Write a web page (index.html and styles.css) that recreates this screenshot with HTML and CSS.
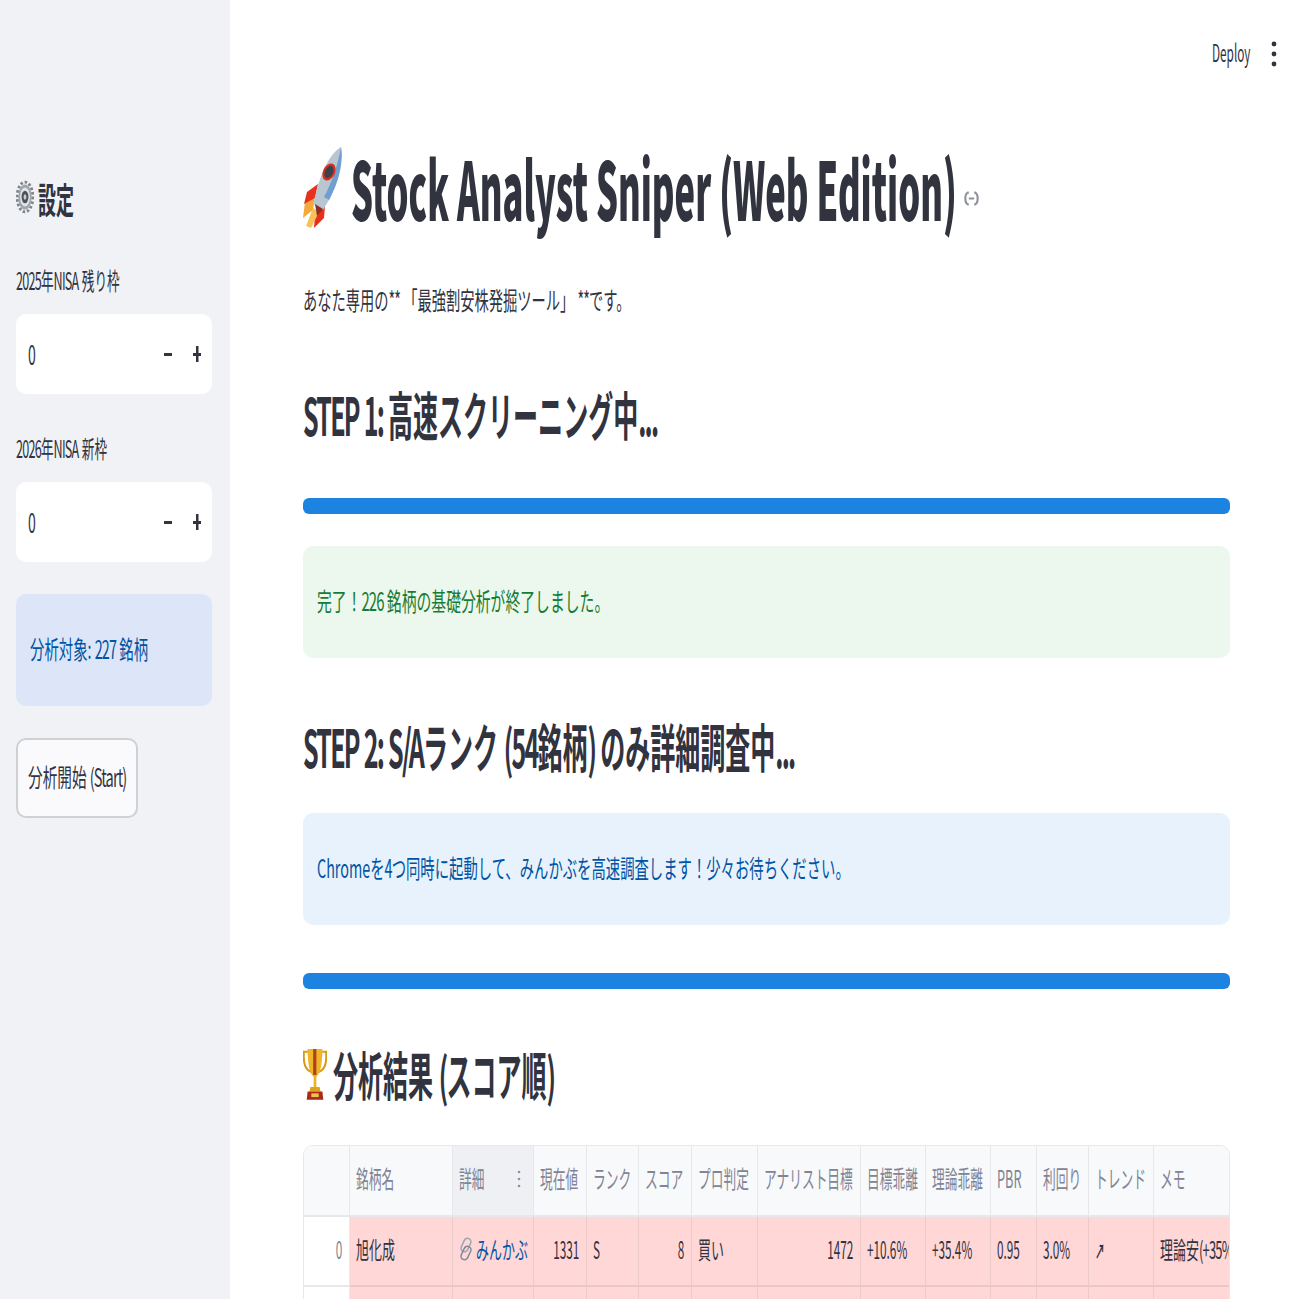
FILE: index.html
```html
<!DOCTYPE html>
<html lang="ja">
<head>
<meta charset="utf-8">
<title>Stock Analyst Sniper</title>
<link rel="stylesheet" href="styles.css">
</head>
<body>
<div class="app">
  <aside class="sidebar">
    <div class="side-head">
      <svg class="gear" viewBox="0 0 20 38"><ellipse cx="10" cy="19" rx="8.700" ry="16.500" fill="none" stroke="#7f8489" stroke-width="3.200" stroke-dasharray="2.800 2.200"/><ellipse cx="10" cy="19" rx="7.500" ry="14" fill="#9fa5aa"/><ellipse cx="10" cy="19" rx="5.500" ry="10.500" fill="#dfe4e8"/><ellipse cx="10" cy="19" rx="3.800" ry="7" fill="#4d5257"/><ellipse cx="10" cy="19" rx="1.600" ry="3" fill="#c9cdd1"/></svg>
      <span class="sq-h side-title">設定</span>
    </div>
    <div class="side-label"><span class="sq"><span class="l">2025</span>年<span class="l">NISA </span>残り枠</span></div>
    <div class="num-input"><span class="sq zero">0</span><span class="steps"><i class="minus"></i><i class="plus"></i></span></div>
    <div class="side-label second"><span class="sq"><span class="l">2026</span>年<span class="l">NISA </span>新枠</span></div>
    <div class="num-input"><span class="sq zero">0</span><span class="steps"><i class="minus"></i><i class="plus"></i></span></div>
    <div class="side-info"><span class="sq">分析対象: <span class="l">227</span> 銘柄</span></div>
    <button class="start"><span class="sq">分析開始 <span class="l">(Start)</span></span></button>
  </aside>
  <main class="main">
    <div class="topbar"><span class="sq n deploy">Deploy</span>
      <svg class="kebab" viewBox="0 0 6 26"><circle cx="3" cy="3" r="2.400"/><circle cx="3" cy="13" r="2.400"/><circle cx="3" cy="23" r="2.400"/></svg>
    </div>
    <div class="h1-row">
      <svg class="rocket" viewBox="0 0 40 82">
        <path d="M12 50 L2 56 L0 72 L10 64Z" fill="#f4a93b"/>
        <path d="M15 38 L4 46 L1 58 L12 52Z" fill="#e8311d"/>
        <path d="M22 60 L21 72 L11 82 L12 68Z" fill="#e8311d"/>
        <path d="M10 62 L16 66 L8 82 L3 80Z" fill="#f8c25a"/>
        <path d="M38 1 C40 12 38 32 26 54 L20 64 L10 58 L13 47 C18 28 26 8 38 1Z" fill="#b9c6d2"/>
        <path d="M38 1 C40 12 38 32 26 54 L21 51 C30 34 35 18 38 1Z" fill="#6f9fd0"/>
        <ellipse cx="26" cy="26" rx="6" ry="9" transform="rotate(25 26 26)" fill="#d8301f"/>
        <ellipse cx="26" cy="26" rx="4" ry="6.500" transform="rotate(25 26 26)" fill="#39424e"/>
        <path d="M12 58 L20 63 L14 70Z" fill="#8a3226"/>
      </svg>
      <h1 class="sq-h title">Stock Analyst Sniper (Web Edition)</h1>
      <svg class="anchor" viewBox="0 0 14 14" fill="none" stroke="#8f929c" stroke-width="2"><path d="M4.500 1.500H3.500C0.500 3 0.500 11 3.500 12.500H4.500M9.500 1.500H10.500C13.500 3 13.500 11 10.500 12.500H9.500M4.500 7H9.500"/></svg>
    </div>
    <p class="lead"><span class="sq">あなた専用の<span class="l">**</span> 「最強割安株発掘ツール」 <span class="l">**</span>です。</span></p>
    <h2 class="h2 step1"><span class="sq-h"><span class="lh">STEP 1: </span>高速スクリーニング中<span class="lh">...</span></span></h2>
    <div class="bar first"></div>
    <div class="alert ok"><span class="sq">完了！<span class="l">226</span> 銘柄の基礎分析が終了しました。</span></div>
    <h2 class="h2 step2"><span class="sq-h"><span class="lh">STEP 2: S/A</span>ランク <span class="lh">(54</span>銘柄<span class="lh">) </span>のみ詳細調査中<span class="lh">...</span></span></h2>
    <div class="alert info"><span class="sq">Chromeを<span class="l">4</span>つ同時に起動して、みんかぶを高速調査します！少々お待ちください。</span></div>
    <div class="bar second"></div>
    <div class="h2-row">
      <svg class="trophy" viewBox="0 0 26 56">
        <path d="M6 4 H1 C0 16 3 24 9 26" fill="none" stroke="#d89a1c" stroke-width="2.200"/>
        <path d="M20 4 H25 C26 16 23 24 17 26" fill="none" stroke="#d89a1c" stroke-width="2.200"/>
        <path d="M5 1 H21 C21 20 18 28 14.500 31 V42 H11.500 V31 C8 28 5 20 5 1Z" fill="#f0b429"/>
        <rect x="11" y="1" width="3.500" height="28" fill="#a8451a"/>
        <path d="M8 42 H18 L19 47 H7Z" fill="#e0a020"/>
        <path d="M5 47 H21 L22 56 H4Z" fill="#a92a16"/>
        <rect x="9" y="49" width="8" height="4" fill="#f0c050"/>
      </svg>
      <h2 class="h2"><span class="sq-h">分析結果 <span class="lh">(</span>スコア順<span class="lh">)</span></span></h2>
    </div>
    <div class="table">
      <div class="row head">
        <div class="c idx-head"></div>
        <div class="c"><span class="sq">銘柄名</span></div>
        <div class="c hover"><span class="sq">詳細</span><svg class="dots" viewBox="0 0 4 20"><circle cx="2" cy="3" r="1.300"/><circle cx="2" cy="10" r="1.300"/><circle cx="2" cy="17" r="1.300"/></svg></div>
        <div class="c"><span class="sq">現在値</span></div>
        <div class="c"><span class="sq">ランク</span></div>
        <div class="c"><span class="sq">スコア</span></div>
        <div class="c"><span class="sq">プロ判定</span></div>
        <div class="c"><span class="sq">アナリスト目標</span></div>
        <div class="c"><span class="sq">目標乖離</span></div>
        <div class="c"><span class="sq">理論乖離</span></div>
        <div class="c"><span class="sq n">PBR</span></div>
        <div class="c"><span class="sq">利回り</span></div>
        <div class="c"><span class="sq">トレンド</span></div>
        <div class="c"><span class="sq">メモ</span></div>
      </div>
      <div class="row body">
        <div class="c idx r"><span class="sq n">0</span></div>
        <div class="c"><span class="sq">旭化成</span></div>
        <div class="c link"><svg class="clip" viewBox="0 0 14 24" fill="none" stroke-width="1.500"><rect x="3.500" y="1" width="7" height="14" rx="3.500" transform="rotate(25 7 8)" stroke="#9aa6b2"/><rect x="3.500" y="9" width="7" height="14" rx="3.500" transform="rotate(25 7 16)" stroke="#7d8b99"/></svg><span class="sq">みんかぶ</span></div>
        <div class="c r"><span class="sq n">1331</span></div>
        <div class="c"><span class="sq n">S</span></div>
        <div class="c r"><span class="sq n">8</span></div>
        <div class="c"><span class="sq">買い</span></div>
        <div class="c r"><span class="sq n">1472</span></div>
        <div class="c"><span class="sq n">+10.6%</span></div>
        <div class="c"><span class="sq n">+35.4%</span></div>
        <div class="c"><span class="sq n">0.95</span></div>
        <div class="c"><span class="sq n">3.0%</span></div>
        <div class="c"><span class="sq arrow">↗</span></div>
        <div class="c"><span class="sq">理論安<span class="l">(+35%)</span></span></div>
      </div>
      <div class="row body">
        <div class="c idx"></div><div class="c"></div><div class="c"></div><div class="c"></div><div class="c"></div><div class="c"></div><div class="c"></div><div class="c"></div><div class="c"></div><div class="c"></div><div class="c"></div><div class="c"></div><div class="c"></div><div class="c"></div>
      </div>
    </div>
  </main>
</div>
</body>
</html>
```
FILE: styles.css
```css
* { box-sizing: border-box; }
html, body { margin: 0; height: 1299px; overflow: hidden; background: #fff; }
body { font-family: "Noto Sans CJK JP", "Noto Sans", sans-serif; color: #31333f; }
.app { display: flex; height: 1299px; }

.sq, .sq-h { display: inline-block; white-space: nowrap; transform-origin: left center; }
.sq { transform: scaleX(var(--s, .57)); font-size: 25px; line-height: 1.2; }
.sq-h { transform: scaleX(var(--s, .481)); font-weight: 700; }
.sq.n { --s: .49; font-size: 24px; }
.l { letter-spacing: -.06em; word-spacing: .1em; }
.lh { letter-spacing: -3.6px; word-spacing: 2px; }

.sidebar { width: 230px; flex: none; background: #f0f2f6; padding: 176px 18px 0 16px; display: flex; flex-direction: column; overflow: hidden; }
.side-head { display: flex; align-items: center; gap: 4px; height: 44px; }
.gear { width: 18px; height: 38px; flex: none; margin-top: -2px; }
.side-title { font-size: 36px; line-height: 44px; --s: .5; }
.side-label { height: 40px; margin-top: 40px; display: flex; align-items: center; }
.side-label.second { margin-top: 34px; }
.side-label .sq { font-size: 24px; --s: .525; }
.num-input { height: 80px; margin-top: 14px; background: #fff; border-radius: 10px; display: flex; align-items: center; justify-content: space-between; padding: 0 11px 0 12px; }
.sq.zero { width: 14px; font-size: 27px; --s: .52; }
.steps { display: flex; gap: 21px; align-items: center; }
.minus { width: 8px; height: 3px; background: #31333f; display: block; }
.plus { width: 8px; height: 16px; display: block; background: linear-gradient(#31333f,#31333f) center/8px 3px no-repeat, linear-gradient(#31333f,#31333f) center/2.500px 16px no-repeat; }
.side-info { height: 112px; margin-top: 32px; background: #dde6f8; border-radius: 10px; color: #0054a3; padding: 0 0 4px 14px; display: flex; align-items: center; }
.side-info .sq { --s: .575; }
.start { width: 122px; height: 80px; margin-top: 32px; background: #fafafc; border: 2px solid #cfd0d4; border-radius: 10px; padding: 0 0 3px 10px; text-align: left; color: #31333f; font: inherit; overflow: hidden; }
.start .sq { --s: .585; }

.main { flex: 1; min-width: 0; padding: 0 69px 0 73px; position: relative; overflow: hidden; }
.topbar { position: absolute; top: 41px; right: 22px; display: flex; align-items: center; }
.deploy { position: absolute; right: 27px; transform-origin: right center; top: -3px; }
.kebab { width: 6px; height: 26px; fill: #31333f; }

.h1-row { display: flex; align-items: center; height: 90px; margin-top: 142px; position: relative; }
.rocket { width: 40px; height: 82px; flex: none; margin-right: 8px; }
.title { font-size: 80px; line-height: 90px; margin: 0 0 2px; font-weight: 900; --s: .432; }
.anchor { position: absolute; left: 661px; top: 49px; width: 15px; height: 15px; }
.lead { margin: 47px 0 0; height: 40px; display: flex; align-items: center; }
.h2 { margin: 0; height: 60px; display: flex; align-items: center; }
.h2 .sq-h { font-size: 52px; line-height: 60px; }
.step1 { margin-top: 65px; }
.bar { height: 16px; background: #1c83e1; border-radius: 6px; }
.bar.first { margin-top: 54px; }
.bar.second { margin-top: 48px; }
.alert { height: 112px; border-radius: 10px; padding: 0 0 4px 14px; display: flex; align-items: center; margin-top: 32px; }
.ok { background: #ecf7ee; color: #177c33; }
.ok .sq { --s: .593; }
.info { background: #e8f2fd; color: #0054a3; margin-top: 37px; }
.info .sq { --s: .574; }
.step2 { margin-top: 58px; }
.h2-row { display: flex; align-items: center; gap: 6px; height: 60px; margin-top: 55px; }
.trophy { width: 24px; height: 56px; flex: none; }
.table { margin-top: 41px; border: 1px solid #e6e8ec; border-radius: 10px 10px 0 0; overflow: hidden; width: 927px; }
.row { display: grid; grid-template-columns: 46px 103px 81px 53px 52px 53px 66px 103px 65px 65px 46px 52px 65px 76px; }
.c { display: flex; align-items: center; padding: 0 7px 4px 6px; overflow: hidden; border-right: 1px solid #e6e8ec; min-width: 0; }
.c:last-child { border-right: 0; }
.head { height: 71px; background: #f8f9fb; color: #808495; }
.head .c { border-bottom: 2px solid #e6e8ec; }
.head .sq { font-size: 24px; --s: .53; }
.hover { background: #eff0f4; justify-content: space-between; padding-right: 12px; }
.dots { width: 4px; height: 20px; fill: #8f919d; flex: none; }
.body { height: 70px; background: #ffd7d7; }
.body .c { border-right-color: #eccaca; border-bottom: 2px solid #ecc6c6; }
.body .sq { font-size: 24px; --s: .54; }
.body .sq.n { --s: .49; }
.body .idx { background: #fff; color: #808495; border-color: #e6e8ec; }
.r { justify-content: flex-end; }
.r .sq { transform-origin: right center; }
.link { color: #0054a3; gap: 3px; padding-right: 0; }
.link .sq { --s: .54; }
.clip { width: 14px; height: 24px; flex: none; }
.body .sq.arrow { font-size: 20px; --s: .5; font-weight: 700; margin-top: 4px; }
```
